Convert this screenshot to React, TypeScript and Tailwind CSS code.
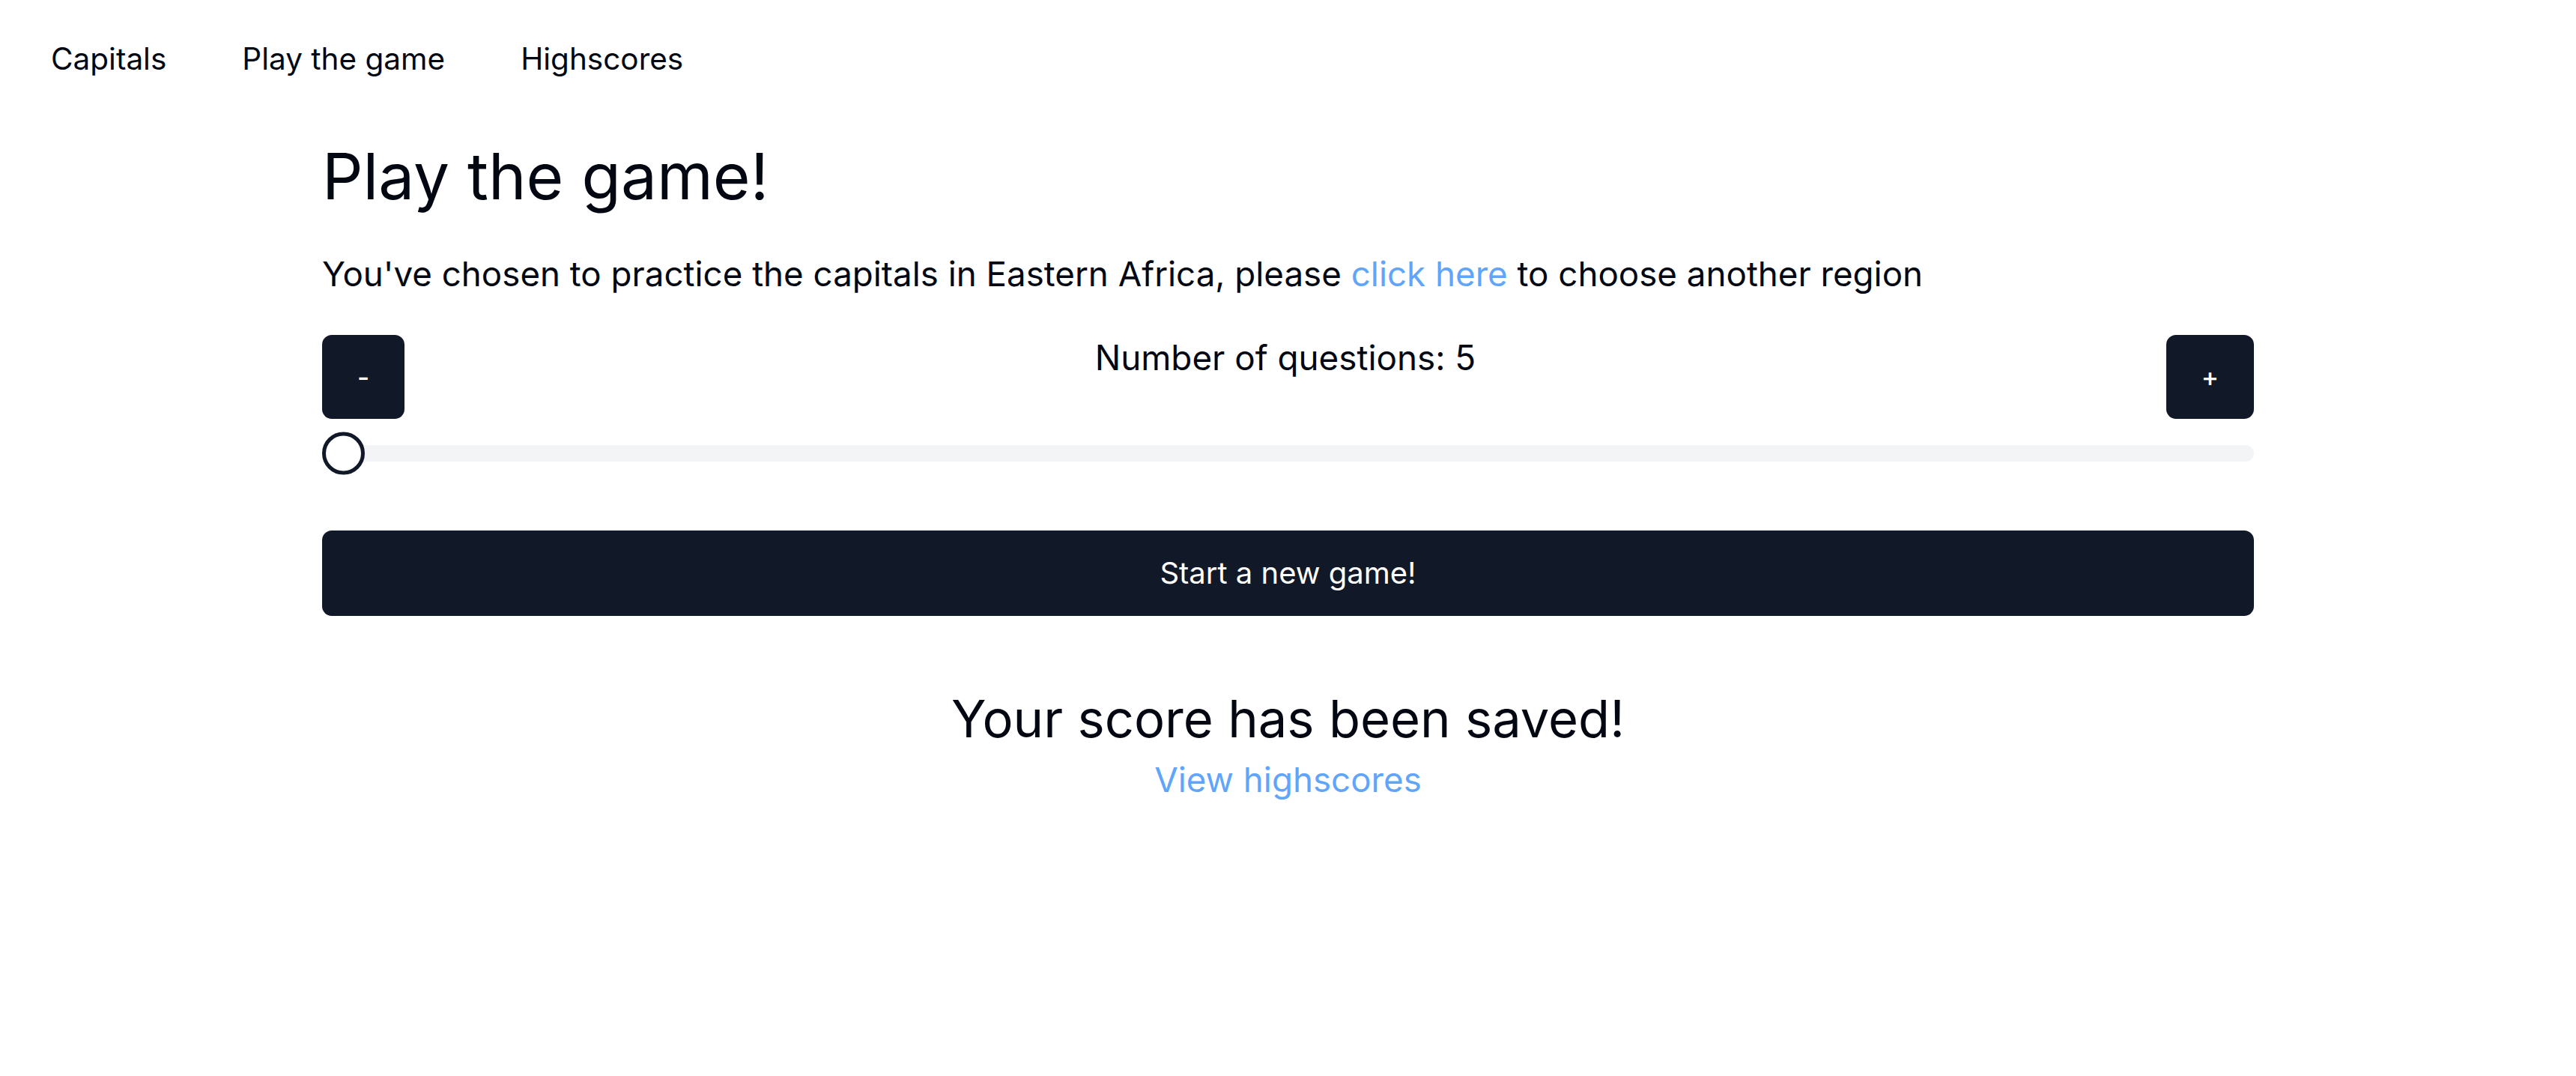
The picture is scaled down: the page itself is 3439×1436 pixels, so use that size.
import React from "react";

const App = () => {
  return (
    <div className="min-h-screen bg-white font-['Inter',sans-serif] text-[#030712]">
      <nav className="flex gap-[101px] pl-[68px] pt-[48px]">
        <a className="text-[40.5px] leading-[61px]">Capitals</a>
        <a className="text-[40.5px] leading-[61px]">Play the game</a>
        <a className="text-[40.5px] leading-[61px]">Highscores</a>
      </nav>

      <main className="mx-auto w-3/4">
        <h1 className="mt-[82px] text-[85.5px] leading-[88px]">Play the game!</h1>
        <p className="mt-[56px] text-[45.7px] leading-[61px]">
          You've chosen to practice the capitals in Eastern Africa, please{" "}
          <a className="text-[#60a5fa]">click here</a> to choose another region
        </p>

        <div className="mt-[51px] flex items-start justify-between">
          <button className="h-[112px] rounded-[13px] bg-[#111827] px-[47px] text-[35px] font-medium text-white">
            -
          </button>
          <span className="text-[45.8px] leading-[61px]">Number of questions: 5</span>
          <button className="h-[112px] rounded-[13px] bg-[#111827] px-[47px] text-[35px] font-medium text-white">
            +
          </button>
        </div>

        <div className="relative mt-[35px] h-[22px] rounded-full bg-[#f3f4f6]">
          <div className="absolute left-0 top-1/2 h-[57px] w-[57px] -translate-y-1/2 rounded-full border-[5px] border-[#111827] bg-white" />
        </div>

        <button className="mt-[92px] h-[114px] w-full rounded-[13px] bg-[#111827] text-[40px] text-white">
          Start a new game!
        </button>

        <div className="mt-[98px] flex flex-col items-center">
          <h2 className="text-[68.7px] leading-[79px]">Your score has been saved!</h2>
          <a className="mt-[11px] text-[45.7px] leading-[61px] text-[#60a5fa]">View highscores</a>
        </div>
      </main>
    </div>
  );
};

export default App;
